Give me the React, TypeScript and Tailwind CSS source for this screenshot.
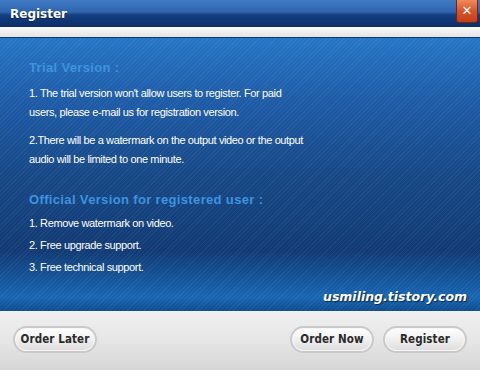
import React from "react";

const Btn = ({ label, w }: { label: string; w: string }) => (
  <div className={`${w} h-[27px] rounded-full border-2 border-[#c9c9c9] bg-[linear-gradient(#ffffff,#eeeeee_55%,#dcdcdc)] shadow-[inset_0_0_0_1px_#f7f7f7] flex items-center justify-center text-[11.5px] font-bold text-[#2a2a2a] font-['DejaVu_Sans_Condensed','DejaVu_Sans',sans-serif] tracking-[0.1px]`}>
    {label}
  </div>
);

export default function App() {
  return (
    <div className="w-[480px] h-[370px] flex flex-col bg-[#e9e9e9] overflow-hidden font-['Liberation_Sans',Arial,sans-serif]">
      <div className="h-[27px] shrink-0 flex items-start justify-between bg-[linear-gradient(#3f7bc4,#2d64ad_45%,#143f82_55%,#0d2d66)]">
        <div className="pl-[10px] pt-[5px] text-white font-bold text-[12px] font-['DejaVu_Sans',sans-serif] [text-shadow:0_1px_1px_#0a2350]">Register</div>
        <div className="mr-[2px] w-[22px] h-[23px] rounded-b-[3px] bg-[linear-gradient(#f08a5a,#d9532a_50%,#c13e1a)] border border-[#7a2410] border-t-0 flex items-center justify-center text-white font-bold text-[13px] font-['DejaVu_Sans',sans-serif]">✕</div>
      </div>
      <div className="h-[10px] shrink-0 bg-[linear-gradient(#fafafa,#e4e4e4)]" />
      <div className="relative h-[274px] shrink-0 border-t border-[#0c3a78] bg-[linear-gradient(180deg,#2675c6_0%,#1e5ca8_22%,#164886_50%,#113a74_78%,#1766b2_95%,#0f4c8c_100%)] overflow-hidden">
        <div className="absolute inset-0 bg-[repeating-linear-gradient(135deg,rgba(255,255,255,0.05)_0px,rgba(255,255,255,0.05)_1px,transparent_1px,transparent_3px)]" />
        <div className="relative flex flex-col pl-[29px] pt-[20px] text-white text-[11px] leading-[19px] tracking-[-0.37px]">
          <div className="text-[#3e93e0] font-bold text-[13px] tracking-[0.35px]">Trial Version :</div>
          <div className="mt-[7px]">1. The trial version won't allow users to register. For paid</div>
          <div>users, please e-mail us for registration version.</div>
          <div className="mt-[9px]">2.There will be a watermark on the output video or the output</div>
          <div>audio will be limited to one minute.</div>
          <div className="mt-[21px] text-[#3e93e0] font-bold text-[13px] tracking-[0.35px]">Official Version for registered user :</div>
          <div className="mt-[5px]">1. Remove watermark on video.</div>
          <div className="mt-[3px]">2. Free upgrade support.</div>
          <div className="mt-[3px]">3. Free technical support.</div>
        </div>
        <div className="absolute right-[13px] top-[250px] text-white font-bold italic text-[12.5px] font-['DejaVu_Sans',sans-serif] [text-shadow:1px_1px_1px_#0a2350]">usmiling.tistory.com</div>
      </div>
      <div className="flex-1 bg-[linear-gradient(#f0f0f0,#e6e6e6_50%,#d6d6d6)] flex items-start px-[13px] pt-[15px]">
        <Btn label="Order Later" w="w-[84px]" />
        <div className="flex-1" />
        <Btn label="Order Now" w="w-[84px]" />
        <div className="w-[9px]" />
        <Btn label="Register" w="w-[84px]" />
      </div>
    </div>
  );
}
